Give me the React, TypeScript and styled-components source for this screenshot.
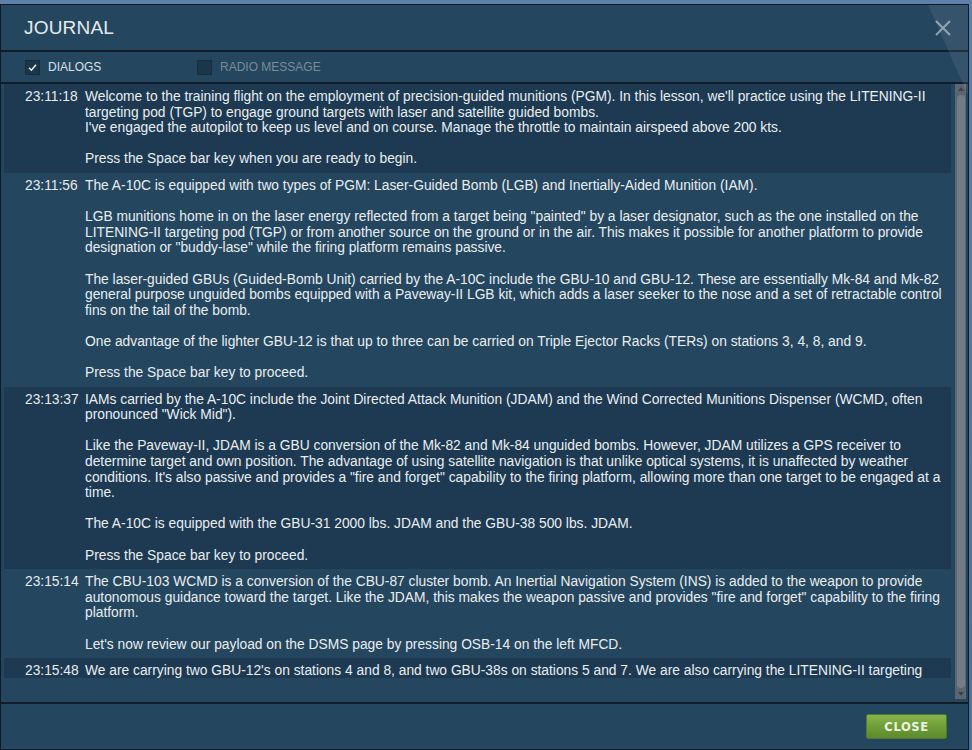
import styled, { createGlobalStyle } from 'styled-components';

const GlobalStyle = createGlobalStyle`
  html, body {
    margin: 0;
    padding: 0;
    background: #4f7398;
  }
  body {
    font-family: "Liberation Sans", Arial, sans-serif;
  }
`;

type Entry = { time: string; text: string };

const entries: Entry[] = [
  {
    time: '23:11:18',
    text: "Welcome to the training flight on the employment of precision-guided munitions (PGM). In this lesson, we'll practice using the LITENING-II targeting pod (TGP) to engage ground targets with laser and satellite guided bombs.\nI've engaged the autopilot to keep us level and on course. Manage the throttle to maintain airspeed above 200 kts.\n\nPress the Space bar key when you are ready to begin.",
  },
  {
    time: '23:11:56',
    text: 'The A-10C is equipped with two types of PGM: Laser-Guided Bomb (LGB) and Inertially-Aided Munition (IAM).\n\nLGB munitions home in on the laser energy reflected from a target being "painted" by a laser designator, such as the one installed on the LITENING-II targeting pod (TGP) or from another source on the ground or in the air. This makes it possible for another platform to provide designation or "buddy-lase" while the firing platform remains passive.\n\nThe laser-guided GBUs (Guided-Bomb Unit) carried by the A-10C include the GBU-10 and GBU-12. These are essentially Mk-84 and Mk-82 general purpose unguided bombs equipped with a Paveway-II LGB kit, which adds a laser seeker to the nose and a set of retractable control fins on the tail of the bomb.\n\nOne advantage of the lighter GBU-12 is that up to three can be carried on Triple Ejector Racks (TERs) on stations 3, 4, 8, and 9.\n\nPress the Space bar key to proceed.',
  },
  {
    time: '23:13:37',
    text: 'IAMs carried by the A-10C include the Joint Directed Attack Munition (JDAM) and the Wind Corrected Munitions Dispenser (WCMD, often pronounced "Wick Mid").\n\nLike the Paveway-II, JDAM is a GBU conversion of the Mk-82 and Mk-84 unguided bombs. However, JDAM utilizes a GPS receiver to determine target and own position. The advantage of using satellite navigation is that unlike optical systems, it is unaffected by weather conditions. It\'s also passive and provides a "fire and forget" capability to the firing platform, allowing more than one target to be engaged at a time.\n\nThe A-10C is equipped with the GBU-31 2000 lbs. JDAM and the GBU-38 500 lbs. JDAM.\n\nPress the Space bar key to proceed.',
  },
  {
    time: '23:15:14',
    text: 'The CBU-103 WCMD is a conversion of the CBU-87 cluster bomb. An Inertial Navigation System (INS) is added to the weapon to provide autonomous guidance toward the target. Like the JDAM, this makes the weapon passive and provides "fire and forget" capability to the firing platform.\n\nLet\'s now review our payload on the DSMS page by pressing OSB-14 on the left MFCD.',
  },
  {
    time: '23:15:48',
    text: "We are carrying two GBU-12's on stations 4 and 8, and two GBU-38s on stations 5 and 7. We are also carrying the LITENING-II targeting pod on station 10. Let's first use the laser-guided GBU-12 bombs.",
  },
];

const Page = styled.div`
  height: 750px;
  padding-top: 4px;
  padding-right: 3px;
  box-sizing: border-box;
  background: linear-gradient(180deg, #5d81a8 0, #4f7398 100%);
`;

const Window = styled.div`
  position: relative;
  height: 746px;
  box-sizing: border-box;
  border: 1px solid #0e1a26;
  background: #25465f;
  display: flex;
  flex-direction: column;
  color: #e9eef2;

  &::after {
    content: '';
    position: absolute;
    top: 0;
    right: 0;
    width: 60px;
    height: 90px;
    background: rgba(200, 215, 225, 0.1);
    clip-path: polygon(20px 0, 60px 0, 60px 90px);
    pointer-events: none;
  }
`;

const TitleBar = styled.div`
  height: 45px;
  flex: none;
  display: flex;
  align-items: center;
  justify-content: space-between;
  padding: 0 15px 0 23px;
  border-bottom: 2px solid #111d29;
`;

const Title = styled.div`
  font-size: 19px;
  color: #e4ebf0;
  letter-spacing: 0.2px;
`;

const CloseX = styled.button`
  width: 20px;
  height: 20px;
  padding: 0;
  border: none;
  background: none;
  display: flex;
  align-items: center;
  justify-content: center;
`;

const FilterBar = styled.div`
  height: 30px;
  flex: none;
  display: flex;
  align-items: center;
  padding-left: 24px;
  border-bottom: 2px solid #111d29;
`;

const Filter = styled.label<{ $on: boolean }>`
  display: flex;
  align-items: center;
  gap: 8px;
  width: 172px;
  font-size: 12px;
  color: ${(p) => (p.$on ? '#d9e1e7' : '#7b8b98')};
`;

const Box = styled.span`
  width: 15px;
  height: 15px;
  box-sizing: border-box;
  background: #1b3549;
  border: 1px solid #172c3d;
  display: flex;
  align-items: center;
  justify-content: center;
`;

const Body = styled.div`
  flex: 1;
  min-height: 0;
  display: flex;
  padding-right: 2px;
`;

const ListColumn = styled.div`
  flex: 1;
  min-width: 0;
  display: flex;
  flex-direction: column;
  padding: 0 4px 24px 3px;
`;

const Clip = styled.div`
  flex: 1;
  min-height: 0;
  overflow: hidden;
`;

const Row = styled.div<{ $dark: boolean }>`
  display: grid;
  grid-template-columns: 60px 1fr;
  padding: 5px 4px 6px 21px;
  background: ${(p) => (p.$dark ? '#1d3a52' : 'transparent')};
  font-size: 13.8px;
  line-height: 15.6px;
`;

const Time = styled.div`
  color: #e6ecf0;
`;

const Message = styled.div`
  white-space: pre-wrap;
`;

const Scrollbar = styled.div`
  width: 11px;
  flex: none;
  margin-bottom: 3px;
  background: #5d6670;
  display: flex;
  flex-direction: column;
  align-items: center;
  padding: 3px 0;
  box-sizing: border-box;
`;

const Arrow = styled.div<{ $up: boolean }>`
  width: 0;
  height: 0;
  border-left: 3.5px solid transparent;
  border-right: 3.5px solid transparent;
  ${(p) => (p.$up ? 'border-bottom: 4px solid #3b434c;' : 'border-top: 4px solid #3b434c;')}
  flex: none;
`;

const Thumb = styled.div`
  flex: 1;
  width: 8px;
  margin: 4px 0;
  border-radius: 4px;
  background: #747d87;
`;

const Footer = styled.div`
  height: 45px;
  flex: none;
  border-top: 2px solid #111d29;
  display: flex;
  justify-content: flex-end;
  align-items: center;
  padding-right: 21px;
`;

const CloseButton = styled.button`
  width: 81px;
  height: 25px;
  border: 1px solid #4e7a2a;
  border-radius: 2px;
  background: linear-gradient(180deg, #86b44c 0%, #6d9c38 55%, #5c8a2d 100%);
  color: #eef5e2;
  font-family: "DejaVu Sans", "Liberation Sans", sans-serif;
  font-weight: bold;
  font-size: 11.5px;
  letter-spacing: 0.6px;
  cursor: pointer;
`;

const Check = () => (
  <svg width="11" height="11" viewBox="0 0 11 11">
    <path d="M2 5.8 L4.4 8.2 L9 2.8" fill="none" stroke="#eef2f5" strokeWidth="1.5" />
  </svg>
);

export default function App() {
  return (
    <>
      <GlobalStyle />
      <Page>
        <Window>
          <TitleBar>
            <Title>JOURNAL</Title>
            <CloseX aria-label="close">
              <svg width="18" height="18" viewBox="0 0 18 18">
                <path d="M2 2 L16 16 M16 2 L2 16" stroke="#8e9eab" strokeWidth="2" />
              </svg>
            </CloseX>
          </TitleBar>
          <FilterBar>
            <Filter $on>
              <Box>
                <Check />
              </Box>
              DIALOGS
            </Filter>
            <Filter $on={false}>
              <Box />
              RADIO MESSAGE
            </Filter>
          </FilterBar>
          <Body>
            <ListColumn>
              <Clip>
                {entries.map((e, i) => (
                  <Row key={e.time} $dark={i % 2 === 0}>
                    <Time>{e.time}</Time>
                    <Message>{e.text}</Message>
                  </Row>
                ))}
              </Clip>
            </ListColumn>
            <Scrollbar>
              <Arrow $up />
              <Thumb />
              <Arrow $up={false} />
            </Scrollbar>
          </Body>
          <Footer>
            <CloseButton>CLOSE</CloseButton>
          </Footer>
        </Window>
      </Page>
    </>
  );
}
